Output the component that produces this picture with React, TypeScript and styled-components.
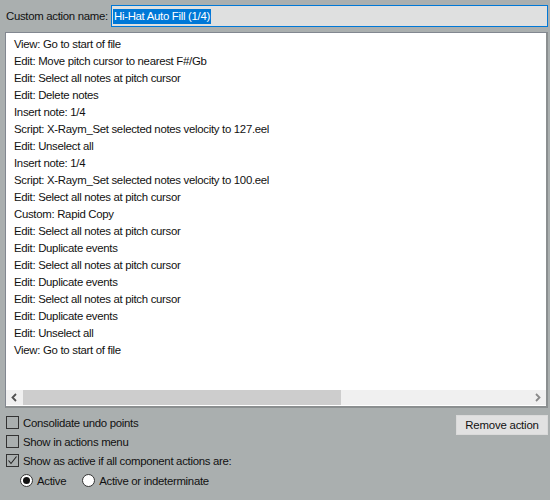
import React from "react";
import styled, { createGlobalStyle } from "styled-components";

const GlobalStyle = createGlobalStyle`
  html, body {
    margin: 0;
    padding: 0;
    background: #aaafaf;
  }
  * {
    box-sizing: border-box;
  }
`;

const Window = styled.div`
  width: 550px;
  height: 500px;
  background: #aaafaf;
  font-family: "Liberation Sans", Arial, sans-serif;
  font-size: 11.4px;
  letter-spacing: -0.3px;
  color: #000;
  display: flex;
  flex-direction: column;
  padding: 5px 2px 0 5px;
  overflow: hidden;
`;

const NameRow = styled.div`
  display: flex;
  align-items: center;
  height: 22px;
`;

const Label = styled.span`
  padding-left: 1px;
  width: 106px;
  white-space: nowrap;
  color: #111;
`;

const NameField = styled.div`
  flex: 1;
  height: 22px;
  border: 1px solid #0078d7;
  background: #dfe0e0;
  display: flex;
  align-items: center;
  padding-left: 1px;
`;

const Selection = styled.span`
  background: #0078d7;
  color: #fff;
  line-height: 15px;
  padding: 0 1px;
`;

const ListBox = styled.div`
  margin-top: 5px;
  height: 376px;
  border: 1px solid #828790;
  border-right: 2px solid #8b8f90;
  border-bottom: 2px solid #8b8f90;
  background: #fff;
  display: flex;
  flex-direction: column;
`;

const Items = styled.div`
  flex: 1;
  padding: 3px 0 0 8px;
  overflow: hidden;
`;

const Item = styled.div`
  height: 17px;
  line-height: 17px;
  white-space: nowrap;
  color: #111;
`;

const HScroll = styled.div`
  height: 15px;
  margin-bottom: 1px;
  background: #f0f0f0;
  display: flex;
  align-items: stretch;
`;

const ArrowCell = styled.div`
  width: 17px;
  display: flex;
  align-items: center;
  justify-content: center;
`;

const Thumb = styled.div`
  width: 318px;
  background: #cdcdcd;
`;

const Track = styled.div`
  flex: 1;
`;

const Footer = styled.div`
  display: flex;
  justify-content: space-between;
  padding: 8px 0 0 1px;
`;

const Options = styled.div`
  display: flex;
  flex-direction: column;
  gap: 6px;
`;

const CheckRow = styled.label`
  display: flex;
  align-items: center;
  gap: 4px;
  height: 13px;
  color: #111;
`;

const Box = styled.span`
  width: 13px;
  height: 13px;
  border: 1px solid #333;
  display: flex;
  align-items: center;
  justify-content: center;
`;

const RadioRow = styled.div`
  display: flex;
  align-items: center;
  gap: 16px;
  padding-left: 14px;
  margin-top: 1px;
`;

const RadioItem = styled.label`
  display: flex;
  align-items: center;
  gap: 4px;
  color: #111;
`;

const Circle = styled.span<{ $on?: boolean }>`
  width: 13px;
  height: 13px;
  border-radius: 50%;
  border: 1px solid #333;
  background: #fff;
  display: flex;
  align-items: center;
  justify-content: center;
  &::after {
    content: "";
    display: ${(p) => (p.$on ? "block" : "none")};
    width: 7px;
    height: 7px;
    border-radius: 50%;
    background: #111;
  }
`;

const Button = styled.button`
  width: 92px;
  height: 20px;
  margin-top: -1px;
  border: 1px solid #dadada;
  background: #e1e1e1;
  font-family: inherit;
  font-size: 11.4px;
  letter-spacing: -0.2px;
  color: #111;
  padding: 0;
`;

const actions = [
  "View: Go to start of file",
  "Edit: Move pitch cursor to nearest F#/Gb",
  "Edit: Select all notes at pitch cursor",
  "Edit: Delete notes",
  "Insert note: 1/4",
  "Script: X-Raym_Set selected notes velocity to 127.eel",
  "Edit: Unselect all",
  "Insert note: 1/4",
  "Script: X-Raym_Set selected notes velocity to 100.eel",
  "Edit: Select all notes at pitch cursor",
  "Custom: Rapid Copy",
  "Edit: Select all notes at pitch cursor",
  "Edit: Duplicate events",
  "Edit: Select all notes at pitch cursor",
  "Edit: Duplicate events",
  "Edit: Select all notes at pitch cursor",
  "Edit: Duplicate events",
  "Edit: Unselect all",
  "View: Go to start of file",
];

// scroll arrow glyphs, the left one is active and darker
const Chevron = ({ dir }: { dir: "left" | "right" }) => (
  <svg width="9" height="9" viewBox="0 0 9 9" style={{ display: "block" }}>
    <path
      d={dir === "left" ? "M6 1 L2.5 4.5 L6 8" : "M3 1 L6.5 4.5 L3 8"}
      fill="none"
      stroke={dir === "left" ? "#505050" : "#8a8a8a"}
      strokeWidth="1.8"
    />
  </svg>
);

const Check = () => (
  <svg width="11" height="11" viewBox="0 0 11 11">
    <path d="M1.5 5.5 L4 8.5 L9.5 1.5" fill="none" stroke="#222" strokeWidth="1.1" />
  </svg>
);

const App: React.FunctionComponent = () => (
  <>
    <GlobalStyle />
    <Window>
      <NameRow>
        <Label>Custom action name:</Label>
        <NameField>
          <Selection>Hi-Hat Auto Fill (1/4)</Selection>
        </NameField>
      </NameRow>
      <ListBox>
        <Items>
          {actions.map((a, i) => (
            <Item key={i}>{a}</Item>
          ))}
        </Items>
        <HScroll>
          <ArrowCell>
            <Chevron dir="left" />
          </ArrowCell>
          <Thumb />
          <Track />
          <ArrowCell>
            <Chevron dir="right" />
          </ArrowCell>
        </HScroll>
      </ListBox>
      <Footer>
        <Options>
          <CheckRow>
            <Box />
            Consolidate undo points
          </CheckRow>
          <CheckRow>
            <Box />
            Show in actions menu
          </CheckRow>
          <CheckRow>
            <Box>
              <Check />
            </Box>
            Show as active if all component actions are:
          </CheckRow>
          <RadioRow>
            <RadioItem>
              <Circle $on />
              Active
            </RadioItem>
            <RadioItem>
              <Circle />
              Active or indeterminate
            </RadioItem>
          </RadioRow>
        </Options>
        <Button>Remove action</Button>
      </Footer>
    </Window>
  </>
);

export default App;
